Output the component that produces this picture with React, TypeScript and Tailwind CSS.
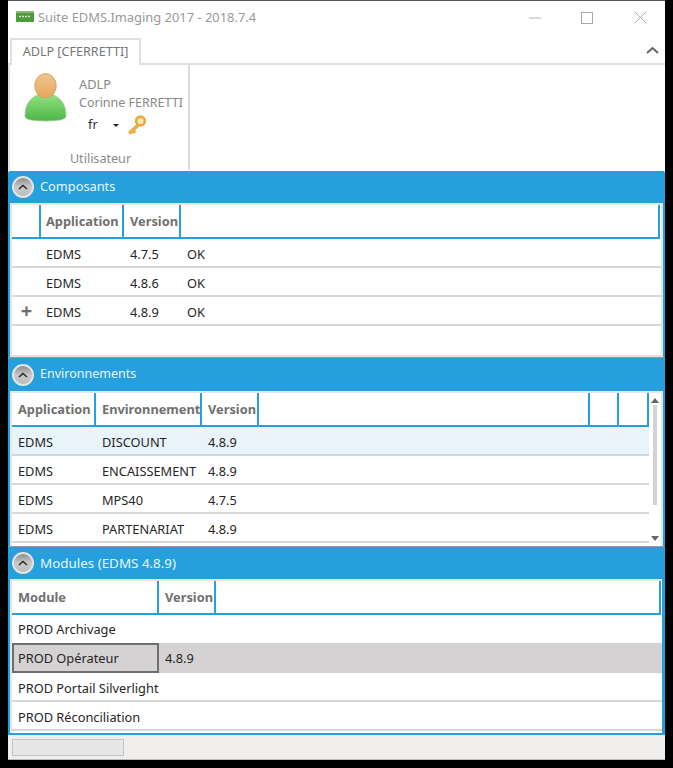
import * as React from "react";

const font = "font-['Noto_Sans','Open_Sans',sans-serif]";

function Toggle() {
  return (
    <div className="w-[22px] h-[22px] rounded-full border-2 border-[#e4e4e4] bg-gradient-to-b from-[#8d8d8d] via-[#c9c9c9] to-[#bdbdbd] flex items-center justify-center">
      <svg width="10" height="6" viewBox="0 0 10 6">
        <path d="M1 5 L5 1.5 L9 5" fill="none" stroke="#222" strokeWidth="1.4" />
      </svg>
    </div>
  );
}

function SectionHeader({ title, h, size = "text-[12.8px]" }: { title: string; h: string; size?: string }) {
  return (
    <div className={`flex items-center gap-[6px] pl-[4px] ${h}`}>
      <Toggle />
      <span className={`${size} text-[#e8f6fd]`}>{title}</span>
    </div>
  );
}

function HeaderCell({ label, w, pl = "pl-[6px]" }: { label?: string; w: string; pl?: string }) {
  return (
    <div className={`${w} ${pl} shrink-0 h-full border-r-2 border-[#25a0dc] pt-[1px] flex items-center text-[12.8px] font-bold text-[#707070]`}>
      {label}
    </div>
  );
}

function Row({
  cells,
  bg = "",
  line = "border-[#d8d8d8]",
  h = "h-[29px]",
}: {
  cells: { w: string; text?: string }[];
  bg?: string;
  line?: string;
  h?: string;
}) {
  return (
    <div className={`flex ${h} border-b-2 ${line} ${bg}`}>
      {cells.map((c, i) => (
        <div key={i} className={`${c.w} shrink-0 pl-[6px] pt-[4px] flex items-center text-[12.8px] text-[#262626]`}>
          {c.text}
        </div>
      ))}
    </div>
  );
}

function Composants() {
  const rows = [
    { mark: "", v: "4.7.5" },
    { mark: "", v: "4.8.6" },
    { mark: "+", v: "4.8.9" },
  ];
  return (
    <div className="h-[154px] mx-[2px] bg-white border-2 border-[#e6e6e6] border-b-[#e0e0e0]">
      <div className="flex h-[34px] border-b-2 border-[#25a0dc] mr-[1px]">
        <HeaderCell w="w-[29px]" />
        <HeaderCell w="w-[83px]" label="Application" pl="pl-[5px]" />
        <HeaderCell w="w-[57px]" label="Version" />
        <div className="flex-1 h-full border-r-2 border-[#25a0dc]" />
      </div>
      {rows.map((r, i) => (
        <div key={i} className="flex h-[29px] border-b-2 border-[#d8d8d8]">
          <div className="w-[29px] pt-[1px] flex items-center justify-center text-[20px] font-bold text-[#6e6e6e]">{r.mark}</div>
          <div className="w-[84px] pl-[5px] pt-[4px] flex items-center text-[12.8px] text-[#262626]">EDMS</div>
          <div className="w-[57px] pl-[5px] pt-[4px] flex items-center text-[12.8px] text-[#262626]">{r.v}</div>
          <div className="pl-[5px] pt-[4px] flex items-center text-[12.8px] text-[#262626]">OK</div>
        </div>
      ))}
    </div>
  );
}

function Environnements() {
  const rows = [
    { n: "DISCOUNT", v: "4.8.9", bg: "bg-[#e8f3fa]", line: "border-[#c9d7e0]" },
    { n: "ENCAISSEMENT", v: "4.8.9", bg: "", line: "border-[#d8d8d8]" },
    { n: "MPS40", v: "4.7.5", bg: "", line: "border-[#d8d8d8]" },
    { n: "PARTENARIAT", v: "4.8.9", bg: "", line: "border-[#d8d8d8]" },
  ];
  return (
    <div className="h-[155px] mx-[2px] bg-white border-2 border-b-0 border-[#e6e6e6] flex">
      <div className="w-[637px] shrink-0">
        <div className="flex h-[34px] border-b-2 border-[#25a0dc]">
          <HeaderCell w="w-[84px]" label="Application" />
          <HeaderCell w="w-[106px]" label="Environnement" />
          <HeaderCell w="w-[57px]" label="Version" />
          <HeaderCell w="w-[331px]" />
          <HeaderCell w="w-[29px]" />
          <HeaderCell w="w-[30px]" />
        </div>
        {rows.map((r) => (
          <Row
            key={r.n}
            bg={r.bg}
            line={r.line}
            cells={[
              { w: "w-[84px]", text: "EDMS" },
              { w: "w-[106px]", text: r.n },
              { w: "w-[57px]", text: r.v },
            ]}
          />
        ))}
      </div>
      <div className="w-[12px] flex flex-col items-center pt-[5px] pb-[5px]">
        <div className="w-0 h-0 border-x-[4px] border-x-transparent border-b-[5px] border-b-[#666]" />
        <div className="w-[4px] h-[100px] mt-[2px] bg-[#d2d2d2]" />
        <div className="flex-1" />
        <div className="w-0 h-0 border-x-[4px] border-x-transparent border-t-[5px] border-t-[#666]" />
      </div>
    </div>
  );
}

function Modules() {
  return (
    <div className="h-[154px] ml-[2px] mr-[3px] bg-white border-t-2 border-l-2 border-[#e6e6e6]">
      <div className="flex h-[34px] border-b-2 border-[#25a0dc] mr-[1px]">
        <HeaderCell w="w-[147px]" label="Module" />
        <HeaderCell w="w-[57px]" label="Version" />
        <div className="flex-1 h-full border-r-2 border-[#25a0dc]" />
      </div>
      <Row h="h-[28px]" line="border-transparent" cells={[{ w: "w-[200px]", text: "PROD Archivage" }]} />
      <div className="flex h-[30px] bg-[#d4d2d3]">
        <div className="w-[147px] pl-[4px] pt-[2px] flex items-center border-2 border-[#6e6e6e] text-[12.8px] text-[#262626]">PROD Opérateur</div>
        <div className="pl-[6px] pt-[2px] flex items-center text-[12.8px] text-[#262626]">4.8.9</div>
      </div>
      <Row cells={[{ w: "w-[200px]", text: "PROD Portail Silverlight" }]} />
      <Row cells={[{ w: "w-[200px]", text: "PROD Réconciliation" }]} />
    </div>
  );
}

export default function App() {
  return (
    <div className={`w-[673px] h-[768px] bg-black overflow-hidden ${font}`}>
      <div className="ml-[8px] w-[657px] h-[760px] bg-white border-t border-[#555] flex flex-col">
        {/* title bar */}
        <div className="h-[36px] shrink-0 flex items-center pl-[8px] pr-[18px]">
          <svg width="18" height="11" viewBox="0 0 18 11" className="mr-[4px] mb-[5px]">
            <rect width="18" height="11" fill="#4f9a3b" />
            <rect width="18" height="2" fill="#84bd72" />
            <path d="M3 5.5H15" stroke="#cfe5c6" strokeWidth="1.6" strokeDasharray="2 1" />
          </svg>
          <span className="text-[12.9px] text-[#9a9a9a] mb-[3px]">Suite EDMS.Imaging 2017 - 2018.7.4</span>
          <div className="flex-1" />
          <svg width="12" height="2" viewBox="0 0 12 2" className="mr-[40px] mb-[3px]">
            <path d="M0 1H12" stroke="#b5b5b5" />
          </svg>
          <div className="w-[12px] h-[12px] border border-[#a8a8a8] mr-[41px] mb-[3px]" />
          <svg width="13" height="13" viewBox="0 0 13 13" className="mb-[3px]">
            <path d="M.5.5l12 12M12.5.5l-12 12" stroke="#b0b0b0" />
          </svg>
        </div>

        {/* tab strip */}
        <div className="h-[28px] shrink-0 flex items-end border-b-2 border-[#e0e0e0] relative pr-[6px]">
          <div className="ml-[2px] mb-[-2px] w-[131px] h-[27px] bg-white border-2 border-b-0 border-[#e0e0e0] flex items-center justify-center text-[12.6px] text-[#757575]">
            ADLP [CFERRETTI]
          </div>
          <div className="flex-1" />
          <svg width="13" height="8" viewBox="0 0 13 8" className="mb-[9px]">
            <path d="M1 7L6.5 2L12 7" fill="none" stroke="#666" strokeWidth="2" />
          </svg>
        </div>

        {/* ribbon */}
        <div className="h-[106px] shrink-0 flex">
          <div className="w-[182px] h-[105px] border-l-2 border-r-2 border-[#e2e2e2] flex flex-col border-r-[#dcdcdc]">
            <div className="flex flex-1">
              <div className="w-[69px] pl-[14px] pt-[8px]">
                <svg width="43" height="49" viewBox="0 0 44 50">
                  <defs>
                    <linearGradient id="body" x1="0" y1="0" x2="0" y2="1">
                      <stop offset="0" stopColor="#8fe27f" />
                      <stop offset="1" stopColor="#4fb548" />
                    </linearGradient>
                    <linearGradient id="head" x1="0" y1="0" x2="0" y2="1">
                      <stop offset="0" stopColor="#efc68f" />
                      <stop offset="1" stopColor="#e8a65a" />
                    </linearGradient>
                  </defs>
                  <path d="M1 44C1 30 8 25 15 22H29C36 25 43 30 43 44C43 48 34 49 22 49C10 49 1 48 1 44Z" fill="url(#body)" stroke="#9ccb92" strokeWidth="0.8" />
                  <ellipse cx="22" cy="13" rx="11" ry="12.5" fill="url(#head)" stroke="#c99a60" strokeWidth="0.8" />
                </svg>
              </div>
              <div className="flex flex-col text-[12.8px] text-[#888] pt-[10px] whitespace-nowrap">
                <span className="h-[19px] leading-[19px]">ADLP</span>
                <span className="h-[19px] leading-[19px] mt-[-1px] text-[12.5px]">Corinne FERRETTI</span>
                <div className="flex items-center h-[24px] mt-[1px]">
                  <span className="ml-[9px] w-[24px] text-[12.8px] text-[#333]">fr</span>
                  <div className="w-0 h-0 border-x-[3px] border-x-transparent border-t-[3px] border-t-[#222] ml-[1px]" />
                  <svg width="20" height="20" viewBox="0 0 20 20" className="ml-[8px]">
                    <circle cx="13.5" cy="6" r="4.4" fill="#fbe6b8" stroke="#e8a93f" strokeWidth="2.6" />
                    <path d="M10.5 9L1.5 17L3.5 19.2L5.5 17.4L7 18.6L8.8 16.6L7.6 15.2L12 11" fill="#efb24c" stroke="#d7963a" strokeWidth="0.8" />
                  </svg>
                </div>
              </div>
            </div>
            <div className="h-[24px] text-center pl-[3px] pt-[4px] text-[12.6px] text-[#8a8a8a]">
              Utilisateur
            </div>
          </div>
        </div>

        {/* panels */}
        <div className="bg-[#25a0dc] rounded-t-[2px] h-[564px] shrink-0 flex flex-col border-b-[2px] border-[#25a0dc]">
          <SectionHeader title="Composants" h="h-[32px]" />
          <Composants />
          <div className="h-[1px] bg-[#9a9a9a]" />
          <SectionHeader title="Environnements" h="h-[33px]" size="text-[12.5px]" />
          <Environnements />
          <div className="h-[1px] bg-[#9a9a9a]" />
          <SectionHeader title="Modules (EDMS 4.8.9)" h="h-[32px]" size="text-[13.4px]" />
          <Modules />
        </div>

        {/* status bar */}
        <div className="flex-1 bg-[#f0eded] border-b border-[#bbb] pl-[4px] pt-[4px]">
          <div className="w-[112px] h-[17px] bg-[#e6e6e6] border border-[#c4c4c4]" />
        </div>
      </div>
    </div>
  );
}
